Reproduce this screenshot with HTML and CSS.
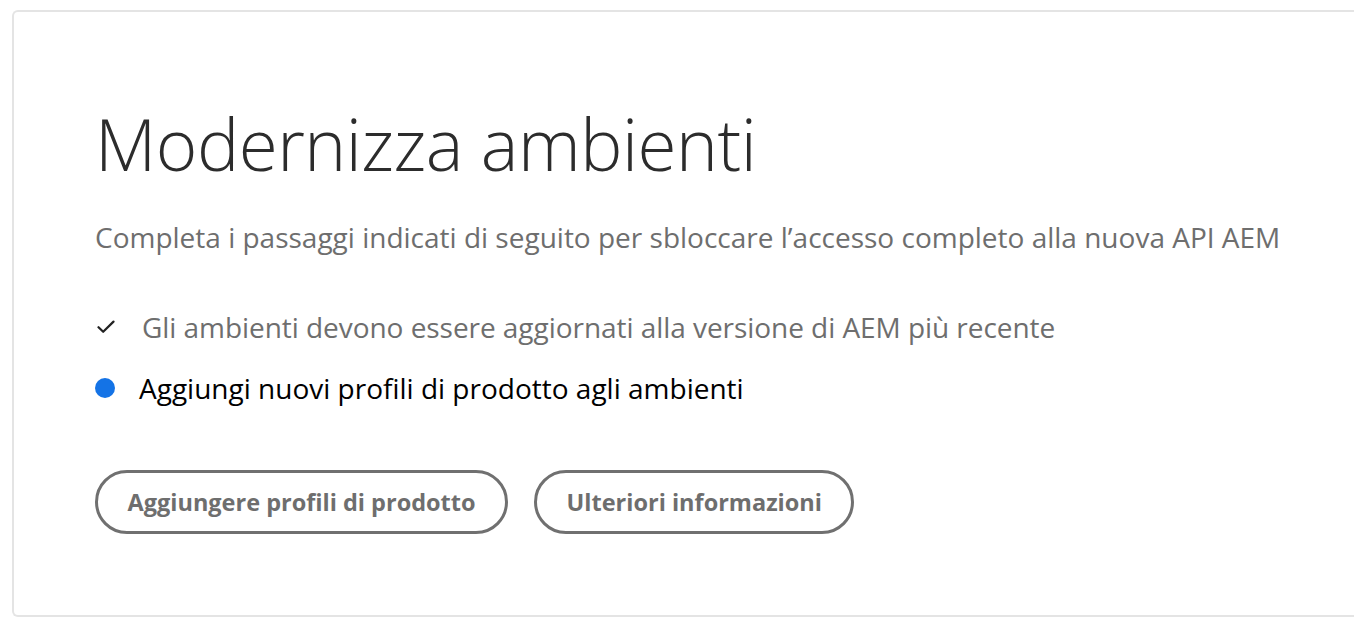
FILE: index.html
```html
<!DOCTYPE html>
<html lang="it">
<head>
<meta charset="utf-8">
<title>Modernizza ambienti</title>
<link rel="stylesheet" href="styles.css">
</head>
<body>
<section class="card">
  <h1 class="title">Modernizza ambienti</h1>
  <p class="subtitle">Completa i passaggi indicati di seguito per sbloccare l’accesso completo alla nuova API AEM</p>
  <ul class="steps">
    <li class="step done">
      <span class="marker">
        <svg width="18" height="14" viewBox="0 0 18 14" aria-hidden="true"><path d="M1.5 7.2 L6.2 11.8 L16.5 1.6" fill="none" stroke="#222" stroke-width="2.2" stroke-linecap="round" stroke-linejoin="round"/></svg>
      </span>
      <span class="step-text">Gli ambienti devono essere aggiornati alla versione di AEM più recente</span>
    </li>
    <li class="step current">
      <span class="marker"><span class="dot"></span></span>
      <span class="step-text">Aggiungi nuovi profili di prodotto agli ambienti</span>
    </li>
  </ul>
  <div class="actions">
    <button class="btn">Aggiungere profili di prodotto</button>
    <button class="btn">Ulteriori informazioni</button>
  </div>
</section>
</body>
</html>
```
FILE: styles.css
```css
html, body {
  margin: 0;
  padding: 0;
  background: #ffffff;
  overflow: hidden;
}
body {
  padding: 10px 0 0 12px;
  font-family: "Open Sans", "Noto Sans", sans-serif;
}
.card {
  height: 607px;
  box-sizing: border-box;
  border: 2px solid #e4e4e4;
  border-right: 0;
  border-radius: 6px 0 0 6px;
  padding: 92px 0 0 81px;
}
.title {
  margin: 0;
  font-size: 71px;
  font-weight: 300;
  line-height: 80px;
  color: #2c2c2c;
  letter-spacing: -0.5px;
}
.subtitle {
  margin: 35px 0 0 0;
  font-size: 28px;
  line-height: 36px;
  color: #6e6e6e;
}
.steps {
  list-style: none;
  margin: 54px 0 0 0;
  padding: 0;
  display: flex;
  flex-direction: column;
  gap: 25px;
}
.step {
  display: flex;
  align-items: center;
  font-size: 28px;
  line-height: 36px;
}
.marker {
  width: 44px;
  display: flex;
  align-items: center;
}
.done .marker { padding-left: 2px; width: 42px; }
.done .step-text { color: #6e6e6e; margin-left: 3px; letter-spacing: -0.05px; }
.current .step-text { color: #000000; }
.dot {
  display: block;
  width: 20px;
  height: 20px;
  border-radius: 50%;
  background: #1473e6;
}
.actions {
  margin-top: 64px;
  display: flex;
  gap: 26px;
}
.btn {
  height: 64px;
  box-sizing: border-box;
  padding: 0 29.5px;
  border: 3px solid #707070;
  border-radius: 32px;
  background: #ffffff;
  font-family: "Open Sans", "Noto Sans", sans-serif;
  font-size: 23.5px;
  font-weight: 700;
  color: #6e6e6e;
  cursor: pointer;
}
```
